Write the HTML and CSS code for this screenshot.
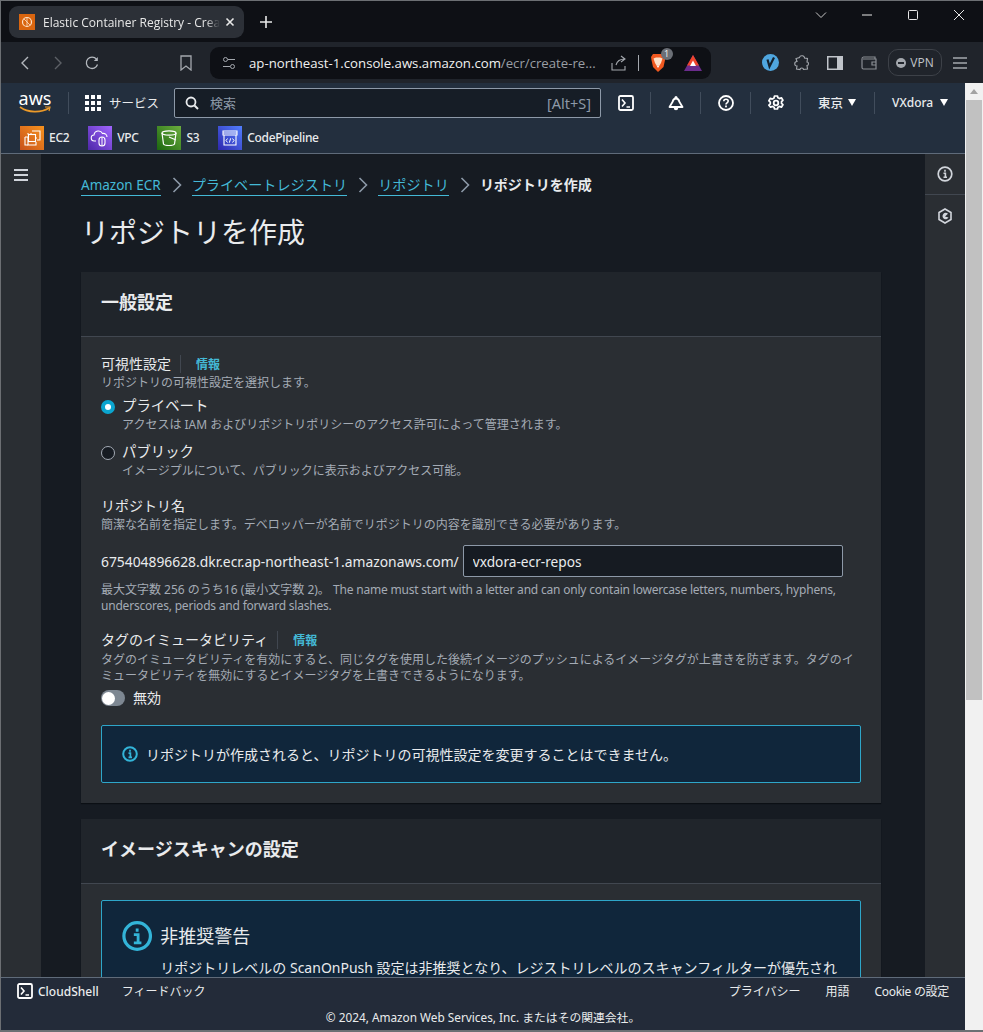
FILE: index.html
```html
<!DOCTYPE html>
<html>

<head>
    <meta charset="utf-8">
    <link rel="stylesheet" href="styles.css">
    <title>Elastic Container Registry - Create repository</title>
</head>

<body>
    <div class="tabstrip">
        <div class="tab">
            <svg class="favicon" width="16" height="16" viewBox="0 0 16 16">
                <rect width="16" height="16" fill="#d9650f"/>
                <circle cx="8" cy="8" r="4.500" fill="none" stroke="#fde2c8" stroke-width="1.200"/>
                <path d="M8 3.500v9M5 5l6 6" stroke="#fde2c8" stroke-width=".8" fill="none"/>
            </svg>
            <span class="tab-title">Elastic Container Registry - Create repository</span>
            <svg width="10" height="10" viewBox="0 0 10 10"><path d="M1.500 1.500l7 7M8.500 1.500l-7 7" stroke="#e8e8e8" stroke-width="1.600"/></svg>
        </div>
        <svg class="newtab" width="14" height="14" viewBox="0 0 14 14"><path d="M7 1v12M1 7h12" stroke="#e8e8e8" stroke-width="1.600"/></svg>
        <div class="window-btns">
            <svg width="12" height="8" viewBox="0 0 12 8"><path d="M1 1.500l5 5 5-5" stroke="#c8c8c8" fill="none"/></svg>
            <svg width="12" height="12" viewBox="0 0 12 12"><path d="M1 6h10" stroke="#e8e8e8" stroke-width="1"/></svg>
            <svg width="12" height="12" viewBox="0 0 12 12"><rect x="1.500" y="1.500" width="9" height="9" rx="1" fill="none" stroke="#e8e8e8"/></svg>
            <svg width="12" height="12" viewBox="0 0 12 12"><path d="M1 1l10 10M11 1L1 11" stroke="#e8e8e8"/></svg>
        </div>
    </div>

    <div class="toolbar">
        <svg class="tb-back" width="12" height="16" viewBox="0 0 12 16"><path d="M9 2L3 8l6 6" stroke="#b4b8be" stroke-width="1.400" fill="none"/></svg>
        <svg class="tb-fwd" width="12" height="16" viewBox="0 0 12 16"><path d="M3 2l6 6-6 6" stroke="#5c6066" stroke-width="1.400" fill="none"/></svg>
        <svg class="tb-reload" width="16" height="16" viewBox="0 0 16 16"><path d="M13.500 9.500A5.700 5.700 0 1 1 12.500 4.200" stroke="#b4b8be" stroke-width="1.300" fill="none"/><path d="M13.800 2v4h-4z" fill="#b4b8be"/></svg>
        <svg class="tb-bookmark" width="12" height="16" viewBox="0 0 12 16"><path d="M1 1h10v14l-5-4-5 4z" stroke="#a4a8ae" stroke-width="1.300" fill="none"/></svg>
        <div class="urlbar">
            <svg class="url-tune" width="14" height="14" viewBox="0 0 14 14"><circle cx="3.500" cy="3.500" r="2" fill="none" stroke="#a4a8ae"/><circle cx="10.500" cy="10.500" r="2" fill="none" stroke="#a4a8ae"/><path d="M6 3.500h7M1 10.500h7" stroke="#a4a8ae"/></svg>
            <span class="url-host">ap-northeast-1.console.aws.amazon.com</span><span class="url-path">/ecr/create-re...</span>
            <svg class="url-share" width="16" height="16" viewBox="0 0 16 16"><path d="M1 8v7h13V11M5 10c1-4 4-6 9-6M10 1l4 3-4 3" stroke="#a4a8ae" stroke-width="1.100" fill="none"/></svg>
            <span class="url-sep"></span>
            <div class="brave">
                <svg width="16" height="20" viewBox="0 0 16 20"><path d="M3 1h10l2.500 3-.5 3-1.500 7L8 19l-5-5-1.500-7-.5-3z" fill="#f0581f"/><path d="M3.500 5.500L6 4.500h4l2.500 1L11 10l-1.500 2.500h-3L5 10z" fill="#fde0c8"/><path d="M6.500 12.500h3L8 15z" fill="#fff"/></svg>
                <span class="brave-badge">1</span>
            </div>
            <svg class="bat" width="18" height="16" viewBox="0 0 18 16"><path d="M9 0l9 16H0z" fill="#6a2c8c"/><path d="M9 0l6 10.500H3z" fill="#f0452c"/><path d="M9 5.500l3 5.500H6z" fill="#fff"/></svg>
        </div>
        <svg class="tb-vivid" width="17" height="17" viewBox="0 0 17 17"><circle cx="8.500" cy="8.500" r="8.500" fill="#4fa6df"/><path d="M5.500 5.500l2 7 4.500-9" stroke="#14202c" stroke-width="2.200" fill="none"/></svg>
        <svg class="tb-ext" width="16" height="16" viewBox="0 0 16 16"><path d="M5.500 2.500a2.500 2 0 0 1 5 .5l3 .5-.5 3.500c2 0 2 3.500 0 3.500l.5 3.500-4 .5c0-2-3.500-2-3.500 0l-3.500-.5.500-3c-3 0-3-4.500 0-4.500L2 3.500z" stroke="#a4a8ae" stroke-width="1.100" fill="none"/></svg>
        <svg class="tb-panel" width="16" height="14" viewBox="0 0 16 14"><rect x=".75" y=".75" width="14.500" height="12.500" fill="none" stroke="#c0c4ca" stroke-width="1.500"/><rect x="10" y="1" width="5" height="12" fill="#c0c4ca"/></svg>
        <svg class="tb-wallet" width="16" height="14" viewBox="0 0 16 14"><path d="M14 3V1H2.500Q1 1 1 3v8.500q0 1.500 1.500 1.500H15V3H2M15 6h-4v3h4" stroke="#8a8e94" stroke-width="1.200" fill="none"/></svg>
        <div class="vpn"><span class="vpn-dot"></span>VPN</div>
        <svg class="tb-menu" width="14" height="12" viewBox="0 0 14 12"><path d="M0 1h14M0 6h14M0 11h14" stroke="#a4a8ae" stroke-width="1.300"/></svg>
    </div>

    <div class="viewport">
        <div class="page">
            <div class="aws-header">
                <div class="nav-row">
                    <div class="aws-logo">
                        <span class="aws-word">aws</span>
                        <svg width="32" height="8" viewBox="0 0 32 8"><path d="M1 1c8 6 21 6 29 1" stroke="#ec9a29" stroke-width="1.600" fill="none"/><path d="M26 1l5 0-1 4" stroke="#ec9a29" stroke-width="1.200" fill="none"/></svg>
                    </div>
                    <span class="nav-sep"></span>
                    <div class="services">
                        <div class="grid-icon"><i></i><i></i><i></i><i></i><i></i><i></i><i></i><i></i><i></i></div>
                        <span>サービス</span>
                    </div>
                    <div class="search">
                        <svg width="14" height="14" viewBox="0 0 14 14"><circle cx="6" cy="6" r="4.500" stroke="#e9ebed" stroke-width="1.800" fill="none"/><path d="M9.500 9.500L13 13" stroke="#e9ebed" stroke-width="2"/></svg>
                        <span class="search-text">検索</span>
                        <span class="search-key">[Alt+S]</span>
                    </div>
                    <div class="nav-icon">
                        <svg width="16" height="16" viewBox="0 0 16 16"><rect x="1" y="1" width="14" height="14" rx="1.500" fill="none" stroke="#fff" stroke-width="1.800"/><path d="M4 4.500L7 8l-3 3.500M8.500 12H12" stroke="#fff" stroke-width="1.600" fill="none"/></svg>
                    </div>
                    <span class="nav-sep"></span>
                    <div class="nav-icon">
                        <svg width="16" height="16" viewBox="0 0 16 16"><circle cx="8" cy="2.500" r="1.500" fill="#fff"/><path d="M8 3.500c-2.500 0-3 1.500-3.500 3.500L1.500 12h13l-3-5c-.5-2-1-3.500-3.500-3.500z" fill="none" stroke="#fff" stroke-width="1.800" stroke-linejoin="round"/><path d="M5.800 13a2.200 2.200 0 0 0 4.400 0z" fill="#fff"/></svg>
                    </div>
                    <span class="nav-sep"></span>
                    <div class="nav-icon">
                        <svg width="16" height="16" viewBox="0 0 16 16"><circle cx="8" cy="8" r="7" fill="none" stroke="#fff" stroke-width="1.800"/><path d="M5.800 6.200C5.800 4.900 6.800 4.200 8 4.200s2.200.8 2.200 1.900c0 1.700-2.200 1.700-2.200 3.300" fill="none" stroke="#fff" stroke-width="1.600"/><rect x="7.100" y="10.500" width="1.800" height="1.800" fill="#fff"/></svg>
                    </div>
                    <span class="nav-sep"></span>
                    <div class="nav-icon">
                        <svg width="16" height="16" viewBox="0 0 16 16"><path d="M6.500 1h3l.4 1.800 1.700.8 1.800-.8 1.500 2.500-1.400 1.300v1.800l1.400 1.300-1.500 2.500-1.800-.8-1.700.8-.4 1.800h-3l-.4-1.800-1.700-.8-1.800.8L.9 10.200l1.400-1.300V7.100L.9 5.800l1.500-2.500 1.800.8 1.700-.8z" fill="none" stroke="#fff" stroke-width="1.700" stroke-linejoin="round"/><circle cx="8" cy="8" r="2.300" fill="none" stroke="#fff" stroke-width="1.800"/></svg>
                    </div>
                    <span class="nav-sep"></span>
                    <div class="nav-menu region">東京<span class="caret"></span></div>
                    <span class="nav-sep"></span>
                    <div class="nav-menu user">VXdora<span class="caret"></span></div>
                </div>
                <div class="fav-row">
                    <div class="fav">
                        <svg class="fav-icon" width="24" height="24" viewBox="0 0 24 24"><defs><linearGradient id="g-ec2" x1="0" y1="1" x2="1" y2="0"><stop offset="0" stop-color="#c8511b"/><stop offset="1" stop-color="#f7931e"/></linearGradient></defs><rect width="24" height="24" fill="url(#g-ec2)"/><g fill="none" stroke="#fff" stroke-width="1.100"><path d="M12 5h8v9h-3M5 11h3v8h8v-3"/><path d="M5 11v8h3"/><rect x="8.500" y="8.500" width="7" height="7"/><path d="M8 7v1.500M11 7v1.500M17 12h-1.500"/></g></svg>
                        <span>EC2</span>
                    </div>
                    <div class="fav">
                        <svg class="fav-icon" width="24" height="24" viewBox="0 0 24 24"><defs><linearGradient id="g-vpc" x1="0" y1="1" x2="1" y2="0"><stop offset="0" stop-color="#4d27a8"/><stop offset="1" stop-color="#a166ff"/></linearGradient></defs><rect width="24" height="24" fill="url(#g-vpc)"/><path d="M8 15H6.500a3 3 0 0 1-.5-6 4.500 4.500 0 0 1 8.500-1.500A3.500 3.500 0 0 1 19 11" fill="none" stroke="#fff" stroke-width="1.100"/><rect x="11" y="11" width="6" height="9" rx="3" fill="none" stroke="#fff" stroke-width="1.100"/><path d="M14 11v9" stroke="#fff"/></svg>
                        <span>VPC</span>
                    </div>
                    <div class="fav">
                        <svg class="fav-icon" width="24" height="24" viewBox="0 0 24 24"><defs><linearGradient id="g-s3" x1="0" y1="1" x2="1" y2="0"><stop offset="0" stop-color="#1b660f"/><stop offset="1" stop-color="#6cae3e"/></linearGradient></defs><rect width="24" height="24" fill="url(#g-s3)"/><ellipse cx="12" cy="7" rx="7" ry="2.200" fill="none" stroke="#fff" stroke-width="1.200"/><path d="M5 7l1.500 11c1 2 10 2 11 0L19 7M12 11l7 3" fill="none" stroke="#fff" stroke-width="1.200"/></svg>
                        <span>S3</span>
                    </div>
                    <div class="fav">
                        <svg class="fav-icon" width="24" height="24" viewBox="0 0 24 24"><defs><linearGradient id="g-cp" x1="0" y1="1" x2="1" y2="0"><stop offset="0" stop-color="#2e27ad"/><stop offset="1" stop-color="#527fff"/></linearGradient></defs><rect width="24" height="24" fill="url(#g-cp)"/><path d="M5 5h14v4H5zM6 9v10h12V9M5 7h14" fill="none" stroke="#fff" stroke-width="1.100"/><path d="M9.500 12.500L8 14.500l1.500 2M14.500 12.500l1.500 2-1.500 2M12.700 12.300l-1.400 4.400" fill="none" stroke="#fff"/></svg>
                        <span>CodePipeline</span>
                    </div>
                </div>
            </div>

            <div class="console">
                <div class="side-nav">
                    <svg width="14" height="12" viewBox="0 0 14 12"><path d="M0 1h14M0 6h14M0 11h14" stroke="#d1d5db" stroke-width="1.800"/></svg>
                </div>
                <div class="main">
                    <div class="crumbs">
                        <a class="crumb-first">Amazon ECR</a>
                        <svg class="crumb-arrow" width="10" height="16" viewBox="0 0 10 16"><path d="M1.500 1l7 7-7 7" stroke="#8d99a8" stroke-width="1.600" fill="none"/></svg>
                        <a>プライベートレジストリ</a>
                        <svg class="crumb-arrow" width="10" height="16" viewBox="0 0 10 16"><path d="M1.500 1l7 7-7 7" stroke="#8d99a8" stroke-width="1.600" fill="none"/></svg>
                        <a>リポジトリ</a>
                        <svg class="crumb-arrow" width="10" height="16" viewBox="0 0 10 16"><path d="M1.500 1l7 7-7 7" stroke="#8d99a8" stroke-width="1.600" fill="none"/></svg>
                        <span class="crumb-current">リポジトリを作成</span>
                    </div>
                    <h1>リポジトリを作成</h1>

                    <div class="card">
                        <div class="card-head"><h2>一般設定</h2></div>
                        <div class="card-body">
                            <div class="label-row"><span class="label">可視性設定</span><span class="info-link">情報</span></div>
                            <div class="hint">リポジトリの可視性設定を選択します。</div>
                            <div class="radio-row first-radio">
                                <span class="radio checked"></span>
                                <div>
                                    <div class="radio-label">プライベート</div>
                                    <div class="hint">アクセスは IAM およびリポジトリポリシーのアクセス許可によって管理されます。</div>
                                </div>
                            </div>
                            <div class="radio-row">
                                <span class="radio"></span>
                                <div>
                                    <div class="radio-label">パブリック</div>
                                    <div class="hint">イメージプルについて、パブリックに表示およびアクセス可能。</div>
                                </div>
                            </div>

                            <div class="label name-label">リポジトリ名</div>
                            <div class="hint">簡潔な名前を指定します。デベロッパーが名前でリポジトリの内容を識別できる必要があります。</div>
                            <div class="repo-row">
                                <span class="repo-prefix">675404896628.dkr.ecr.ap-northeast-1.amazonaws.com/</span>
                                <input class="repo-input" type="text" value="vxdora-ecr-repos">
                            </div>
                            <div class="hint constraint">最大文字数 256 のうち16 (最小文字数 2)。 <span class="en">The name must start with a letter and can only contain lowercase letters, numbers, hyphens, underscores, periods and forward slashes.</span></div>

                            <div class="label-row tag-row"><span class="label">タグのイミュータビリティ</span><span class="info-link">情報</span></div>
                            <div class="hint">タグのイミュータビリティを有効にすると、同じタグを使用した後続イメージのプッシュによるイメージタグが上書きを防ぎます。タグのイミュータビリティを無効にするとイメージタグを上書きできるようになります。</div>
                            <div class="toggle-row"><span class="toggle"></span><span>無効</span></div>

                            <div class="alert small">
                                <svg width="16" height="16" viewBox="0 0 16 16"><circle cx="8" cy="8" r="6.800" fill="none" stroke="#33b4d8" stroke-width="2"/><path d="M8 3.800v2M6.500 7.200H8.400V11M6.500 11.300h3.500" stroke="#33b4d8" stroke-width="1.700" fill="none"/></svg>
                                <span>リポジトリが作成されると、リポジトリの可視性設定を変更することはできません。</span>
                            </div>
                        </div>
                    </div>

                    <div class="card">
                        <div class="card-head"><h2>イメージスキャンの設定</h2></div>
                        <div class="card-body">
                            <div class="alert large">
                                <svg width="32" height="32" viewBox="0 0 32 32"><circle cx="16" cy="16" r="14" fill="none" stroke="#33b4d8" stroke-width="3.400"/><path d="M16 8v3.500M12.500 14.500H17V23M12.500 23.300h8" stroke="#33b4d8" stroke-width="3" fill="none"/></svg>
                                <div>
                                    <div class="alert-title">非推奨警告</div>
                                    <div class="alert-text">リポジトリレベルの ScanOnPush 設定は非推奨となり、レジストリレベルのスキャンフィルターが優先されます。</div>
                                </div>
                            </div>
                        </div>
                    </div>
                </div>
                <div class="right-rail">
                    <div class="rail-item">
                        <svg width="16" height="16" viewBox="0 0 16 16"><circle cx="8" cy="8" r="6.800" fill="none" stroke="#d1d5db" stroke-width="1.700"/><path d="M8 3.800v2M6.500 7.200H8.400V11M6.500 11.300h3.500" stroke="#d1d5db" stroke-width="1.600" fill="none"/></svg>
                    </div>
                    <div class="rail-item">
                        <svg width="14" height="16" viewBox="0 0 14 16"><path d="M7 1l6 3.500v7L7 15l-6-3.500v-7z" fill="none" stroke="#d1d5db" stroke-width="1.600"/><path d="M10 5.800a3.200 3.200 0 1 0 .5 3.800L7 8.500z" fill="#d1d5db"/></svg>
                    </div>
                </div>
            </div>

            <div class="footer">
                <div class="footer-top">
                    <svg width="16" height="16" viewBox="0 0 16 16"><rect x="1" y="1" width="14" height="14" rx="1.500" fill="none" stroke="#fff" stroke-width="1.800"/><path d="M4 4.500L7 8l-3 3.500M8.500 12H12" stroke="#fff" stroke-width="1.600" fill="none"/></svg>
                    <span class="cloudshell">CloudShell</span>
                    <span class="feedback">フィードバック</span>
                    <span class="footer-right">プライバシー</span>
                    <span class="footer-link">用語</span>
                    <span class="footer-link cookie">Cookie の設定</span>
                </div>
                <div class="footer-copy">© 2024, Amazon Web Services, Inc. またはその関連会社。</div>
            </div>
        </div>
        <div class="scrollbar">
            <div class="scroll-up"></div>
            <div class="scroll-thumb"></div>
            <div class="scroll-down"></div>
        </div>
    </div>
</body>

</html>
```

FILE: styles.css
```css
* {
    box-sizing: border-box;
}

html,
body {
    height: 100%;
}

body {
    margin: 0;
    height: 1032px;
    overflow: hidden;
    display: flex;
    flex-direction: column;
    font-family: "Noto Sans", "Noto Sans CJK JP", sans-serif;
    font-size: 12px;
    color: #d1d5db;
    background-color: #0e1015;
    border: 1px solid #6c6f73;
    border-bottom: 2px solid #6c6f73;
    border-right: 0;
}

/* browser chrome */
.tabstrip {
    height: 41px;
    flex: none;
    display: flex;
    align-items: center;
    background-color: #0e1015;
    padding-left: 8px;
}

.tab {
    width: 235px;
    height: 32px;
    margin-top: 1px;
    display: flex;
    align-items: center;
    padding: 0 9px 0 10px;
    background-color: #2c3037;
    border-radius: 9px;
    color: #e8e8e8;
}

.favicon {
    margin-right: 8px;
}

.tab-title {
    flex: 1;
    width: 0;
    margin-right: 5px;
    overflow: hidden;
    white-space: nowrap;
    font-family: "Open Sans", sans-serif;
    font-size: 12px;
    -webkit-mask-image: linear-gradient(to right, #000 92%, transparent 100%);
    mask-image: linear-gradient(to right, #000 92%, transparent 100%);
}

.newtab {
    margin: 1px 0 0 15px;
}

.window-btns {
    margin-left: auto;
    margin-top: -14px;
    display: flex;
    align-items: center;
    gap: 34px;
    padding-right: 18px;
}

.toolbar {
    height: 41px;
    flex: none;
    display: flex;
    align-items: center;
    background-color: #20242b;
    padding-left: 18px;
}

.tb-fwd {
    margin-left: 21px;
}

.tb-reload {
    margin-left: 20px;
}

.tb-bookmark {
    margin-left: 80px;
}

.urlbar {
    width: 501px;
    height: 32px;
    margin-left: 18px;
    display: flex;
    align-items: center;
    padding-left: 12px;
    background-color: #0e1015;
    border-radius: 9px;
    font-family: "Open Sans", sans-serif;
    font-size: 13.200px;
    white-space: nowrap;
}

.url-host {
    margin-left: 13px;
    color: #f0f0f0;
}

.url-path {
    color: #9a9ea4;
}

.url-share {
    margin-left: 15px;
}

.url-sep {
    width: 1px;
    height: 16px;
    margin: 0 11px;
    background-color: #a4a8ae;
}

.brave {
    position: relative;
    display: flex;
}

.brave-badge {
    position: absolute;
    left: 11px;
    top: -5px;
    width: 12px;
    height: 12px;
    border-radius: 50%;
    background-color: #6b6f76;
    color: #f4f4f4;
    font-size: 9px;
    line-height: 12px;
    text-align: center;
}

.bat {
    margin-left: 18px;
}

.tb-vivid {
    margin-left: 51px;
}

.tb-ext {
    margin-left: 15px;
}

.tb-panel {
    margin-left: 17px;
}

.tb-wallet {
    margin-left: 18px;
}

.vpn {
    width: 54px;
    height: 27px;
    margin-left: 11px;
    display: flex;
    align-items: center;
    justify-content: center;
    gap: 4px;
    border: 1px solid #3d4148;
    border-radius: 10px;
    color: #c0c4ca;
    font-family: "Open Sans", sans-serif;
    font-size: 12px;
}

.vpn-dot {
    position: relative;
    width: 10px;
    height: 10px;
    border-radius: 50%;
    background-color: #a4a8ae;
}

.vpn-dot::after {
    content: "";
    position: absolute;
    left: 2px;
    top: 4px;
    width: 6px;
    height: 2px;
    background-color: #20242b;
}

.tb-menu {
    margin-left: 11px;
}

.viewport {
    flex: 1;
    min-height: 0;
    display: flex;
}

.page {
    flex: 1;
    min-width: 0;
    display: flex;
    flex-direction: column;
}

/* aws console header */
.aws-header {
    flex: none;
    height: 71px;
    background-color: #232f3e;
    border-bottom: 1px solid #5f6b7a;
    color: #e9ebed;
}

.nav-row {
    height: 39px;
    display: flex;
    align-items: center;
    padding-left: 18px;
}

.aws-logo {
    width: 32px;
    display: flex;
    flex-direction: column;
    align-items: center;
    margin-right: 17px;
}

.aws-word {
    font-size: 18px;
    line-height: 13px;
    color: #fff;
}

.aws-logo svg {
    display: block;
    margin-top: 1px;
}

.nav-sep {
    width: 1px;
    height: 22px;
    background-color: #414d5c;
}

.services {
    width: 105px;
    display: flex;
    align-items: center;
    gap: 8px;
    padding-left: 16px;
    font-size: 12.500px;
}

.grid-icon {
    width: 16px;
    display: grid;
    grid-template-columns: repeat(3, 4px);
    gap: 2px;
}

.grid-icon i {
    height: 4px;
    background-color: #fff;
}

.search {
    width: 427px;
    height: 30px;
    display: flex;
    align-items: center;
    padding: 0 9px 0 10px;
    background-color: #161d26;
    border: 1px solid #8d99a8;
    border-radius: 2px;
    font-size: 13px;
}

.search-text {
    margin-left: 11px;
    color: #8d99a8;
}

.search-key {
    margin-left: auto;
    font-size: 14.500px;
    color: #8d99a8;
}

.nav-icon {
    width: 49px;
    display: flex;
    justify-content: center;
}

.nav-menu {
    display: flex;
    align-items: center;
    font-size: 12px;
    font-weight: 500;
    color: #e9ebed;
}

.region {
    width: 73px;
    gap: 5px;
    padding-left: 17px;
    font-size: 12.500px;
}

.user {
    gap: 7px;
    padding-left: 17px;
}

.caret {
    width: 0;
    height: 0;
    border-left: 4.500px solid transparent;
    border-right: 4.500px solid transparent;
    border-top: 7px solid #fff;
}

.fav-row {
    display: flex;
    align-items: center;
    padding-left: 19px;
    gap: 18.900px;
    height: 31px;
}

.fav {
    display: flex;
    align-items: center;
    gap: 5px;
    font-size: 12px;
    font-weight: 500;
    letter-spacing: -0.3px;
}

/* console body */
.console {
    flex: 1;
    min-height: 0;
    display: flex;
    overflow: hidden;
    background-color: #161d26;
}

.side-nav {
    width: 40px;
    flex: none;
    padding: 14px 0 0 13px;
    background-color: #2a2e33;
}

.main {
    flex: 1;
    min-width: 0;
    padding: 0 44px 0 40px;
    background-color: #161b22;
}

.right-rail {
    width: 40px;
    flex: none;
    background-color: #2a2e33;
}

.rail-item {
    height: 41px;
    display: flex;
    align-items: center;
    justify-content: center;
    border-bottom: 1px solid #414750;
}

.rail-item + .rail-item {
    border-bottom: 0;
}

.crumbs {
    height: 60px;
    padding-top: 21px;
    display: flex;
    align-items: flex-start;
    font-size: 14.150px;
    line-height: 22px;
}

.crumbs a {
    color: #44b9d6;
    border-bottom: 1px solid #44b9d6;
    line-height: 20px;
}

.crumb-first {
    font-size: 13.500px;
}

.crumb-arrow {
    margin: 2px 10px 0 11px;
}

.crumb-current {
    font-size: 14px;
    font-weight: 700;
    line-height: 20px;
    color: #e9ebed;
}

h1 {
    margin: 0 0 22px;
    font-size: 28px;
    line-height: 36px;
    font-weight: 400;
    color: #e9ebed;
}

.card {
    background-color: #2a2e33;
    margin-bottom: 16px;
    box-shadow: 0 1px 1px #0b0f14;
}

.card-head {
    height: 65px;
    display: flex;
    align-items: center;
    padding: 0 0 6px 20px;
    background-color: #20252b;
    border-bottom: 1px solid #414750;
}

h2 {
    margin: 0;
    font-size: 18px;
    font-weight: 700;
    color: #e9ebed;
}

.card-body {
    padding: 16px 20px 20px;
}

.label-row {
    display: flex;
    align-items: center;
    height: 22px;
}

.label {
    font-size: 14px;
    line-height: 20px;
    color: #e9ebed;
}

.info-link {
    margin-left: 9px;
    padding-left: 15px;
    border-left: 1px solid #414750;
    font-size: 12px;
    font-weight: 700;
    color: #44b9d6;
}

.hint {
    font-size: 12px;
    line-height: 16px;
    color: #a4abb5;
}

.en {
    letter-spacing: -0.2px;
}

.radio-row {
    display: flex;
    gap: 7px;
    margin-bottom: 8px;
}

.first-radio {
    margin-top: 4px;
}

.radio {
    flex: none;
    width: 14px;
    height: 14px;
    margin-top: 5px;
    border: 1.500px solid #a4abb5;
    border-radius: 50%;
    background-color: #161b22;
}

.radio.checked {
    border: 4px solid #0ba5cf;
    background-color: #fff;
}

.radio-label {
    font-size: 14.400px;
    line-height: 22px;
    color: #e9ebed;
}

.name-label {
    margin-top: 16px;
    line-height: 22px;
}

.repo-row {
    display: flex;
    align-items: center;
    margin-top: 12px;
}

.repo-prefix {
    font-size: 13.850px;
    color: #e9ebed;
}

.repo-input {
    width: 380px;
    height: 32px;
    margin-left: 4px;
    padding: 0 9px;
    background-color: #161b22;
    border: 1px solid #8d99a8;
    border-radius: 2px;
    font-family: inherit;
    font-size: 13.700px;
    color: #e9ebed;
}

.constraint {
    margin-top: 5px;
}

.tag-row {
    margin-top: 15px;
    margin-bottom: 1px;
}

.toggle-row {
    display: flex;
    align-items: center;
    gap: 8px;
    margin-top: 4px;
    font-size: 14px;
    line-height: 20px;
    color: #e9ebed;
}

.toggle {
    position: relative;
    width: 24px;
    height: 16px;
    border-radius: 8px;
    background-color: #7d8792;
}

.toggle::before {
    content: "";
    position: absolute;
    left: 1px;
    top: 1.500px;
    width: 13px;
    height: 13px;
    border-radius: 50%;
    background-color: #fff;
}

.alert {
    border: 1px solid #2ea6c9;
    border-radius: 2px;
    background-color: #10263b;
    color: #e9ebed;
}

.alert.small {
    height: 58px;
    margin-top: 17px;
    display: flex;
    align-items: center;
    gap: 8px;
    padding-left: 20px;
    font-size: 14px;
}

.alert.large {
    display: flex;
    gap: 8px;
    padding: 19px 20px;
}

.alert-title {
    font-size: 18px;
    line-height: 32px;
}

.alert-text {
    margin-top: 6px;
    font-size: 14px;
    line-height: 20px;
}

/* footer */
.footer {
    flex: none;
    height: 53px;
    position: relative;
    background-color: #232b39;
    border-top: 1px solid #5f6b7a;
    color: #e9ebed;
}

.footer-top {
    height: 26px;
    display: flex;
    align-items: center;
    padding: 0 16px;
    font-size: 12px;
}

.cloudshell {
    margin-left: 5px;
    font-weight: 500;
}

.feedback {
    margin-left: 23px;
}

.footer-right {
    margin-left: auto;
}

.footer-link {
    margin-left: 25px;
}

.cookie {
    letter-spacing: -0.3px;
}

.footer-copy {
    margin-top: 2px;
    text-align: center;
    font-size: 11.800px;
    line-height: 22px;
}

/* page scrollbar */
.scrollbar {
    width: 18px;
    flex: none;
    display: flex;
    flex-direction: column;
    background-color: #f1f1f1;
}

.scroll-up {
    height: 17px;
    position: relative;
}

.scroll-up::before {
    content: "";
    position: absolute;
    left: 5px;
    top: 6px;
    border-left: 4px solid transparent;
    border-right: 4px solid transparent;
    border-bottom: 5px solid #a3a3a3;
}

.scroll-thumb {
    height: 600px;
    background-color: #c1c1c1;
    margin: 0 1px;
}

.scroll-down {
    margin-top: auto;
    height: 17px;
}
```
